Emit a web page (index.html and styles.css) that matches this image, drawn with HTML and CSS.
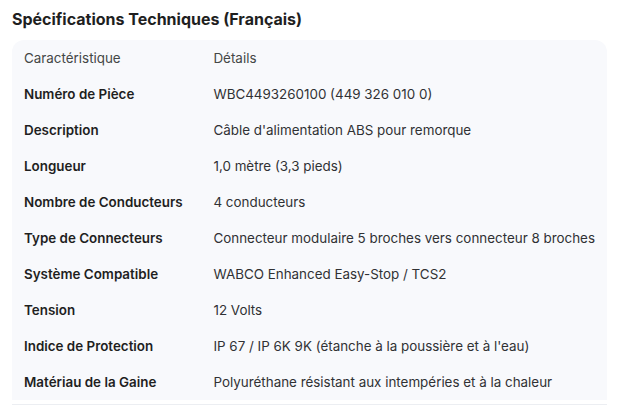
FILE: index.html
```html
<!DOCTYPE html>
<html lang="fr">
<head>
<meta charset="utf-8">
<link rel="stylesheet" href="styles.css">
</head>
<body>
<h2 class="title">Spécifications Techniques (Français)</h2>
<div class="card">
<table class="specs">
<thead>
<tr><th>Caractéristique</th><th>Détails</th></tr>
</thead>
<tbody>
<tr><td class="key">Numéro de Pièce</td><td>WBC4493260100 (449 326 010 0)</td></tr>
<tr><td class="key">Description</td><td>Câble d'alimentation ABS pour remorque</td></tr>
<tr><td class="key">Longueur</td><td>1,0 mètre (3,3 pieds)</td></tr>
<tr><td class="key">Nombre de Conducteurs</td><td>4 conducteurs</td></tr>
<tr><td class="key">Type de Connecteurs</td><td>Connecteur modulaire 5 broches vers connecteur 8 broches</td></tr>
<tr><td class="key">Système Compatible</td><td>WABCO Enhanced Easy-Stop / TCS2</td></tr>
<tr><td class="key">Tension</td><td>12 Volts</td></tr>
<tr><td class="key">Indice de Protection</td><td>IP 67 / IP 6K 9K (étanche à la poussière et à l'eau)</td></tr>
<tr><td class="key">Matériau de la Gaine</td><td>Polyuréthane résistant aux intempéries et à la chaleur</td></tr>
</tbody>
</table>
</div>
<div class="rule"></div>
</body>
</html>
```
FILE: styles.css
```css
html, body {
  margin: 0;
  padding: 0;
  background: #ffffff;
}
body {
  padding: 0 12px;
  font-family: Inter, "Noto Sans", sans-serif;
  color: #1f1f1f;
}
.title {
  margin: 0;
  height: 40px;
  line-height: 38px;
  font-size: 16px;
  font-weight: 700;
  color: #1f1f1f;
}
.card {
  width: 595px;
  background: #f8f9fc;
  border-radius: 12px 12px 0 0;
}
.specs {
  width: 100%;
  border-collapse: collapse;
  font-size: 13.4px;
}
.specs th,
.specs td {
  height: 36px;
  padding: 0 12px;
  text-align: left;
  vertical-align: middle;
  white-space: nowrap;
}
.specs th {
  font-weight: 400;
  color: #444746;
}
.specs th:first-child,
.specs td.key {
  width: 166px;
}
.specs td {
  color: #303134;
}
.specs td.key {
  font-weight: 600;
  color: #1f1f1f;
}
.rule {
  margin-top: 4px;
  width: 595px;
  height: 1px;
  background: #eceef2;
}
```
